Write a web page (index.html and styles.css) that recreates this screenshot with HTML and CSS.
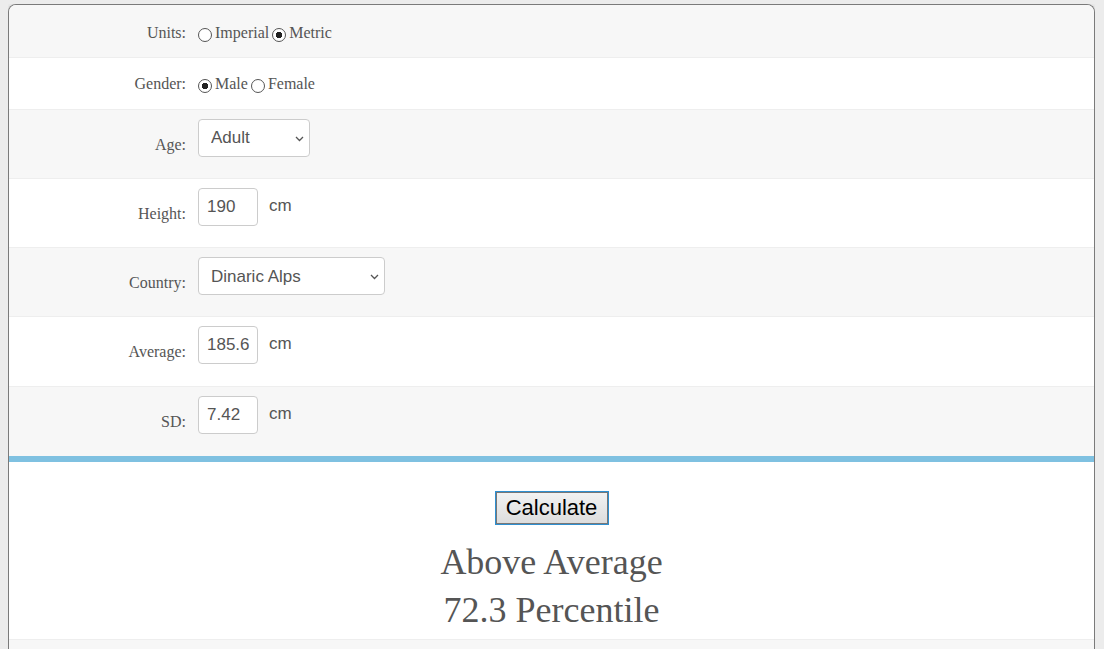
FILE: index.html
```html
<!DOCTYPE html>
<html>
<head>
    <title>Height Percentile Calculator</title>
    <link rel="stylesheet" href="styles.css">
</head>
<body>
    <div class="calculator">
        <form class="form">
            <div class="row first">
                <label class="label">Units:</label>
                <div class="field">
                    <input type="radio" name="units" class="radio"><span>Imperial</span><input type="radio" name="units" class="radio" checked><span>Metric</span>
                </div>
            </div>
            <div class="row short white">
                <label class="label">Gender:</label>
                <div class="field">
                    <input type="radio" name="gender" class="radio" checked><span>Male</span><input type="radio" name="gender" class="radio"><span>Female</span>
                </div>
            </div>
            <div class="row tall">
                <label class="label">Age:</label>
                <div class="field">
                    <div class="select-wrap">
                        <select class="select age">
                            <option>Adult</option>
                            <option>Child</option>
                        </select>
                        <svg class="chevron" width="9" height="6" viewBox="0 0 9 6"><path d="M1 1l3.5 3.5L8 1" fill="none" stroke="#555" stroke-width="1.3"/></svg>
                    </div>
                </div>
            </div>
            <div class="row tall white">
                <label class="label">Height:</label>
                <div class="field">
                    <input type="text" class="number" value="190"><span class="unit">cm</span>
                </div>
            </div>
            <div class="row tall">
                <label class="label">Country:</label>
                <div class="field">
                    <div class="select-wrap">
                        <select class="select country">
                            <option>Dinaric Alps</option>
                            <option>Netherlands</option>
                        </select>
                        <svg class="chevron" width="9" height="6" viewBox="0 0 9 6"><path d="M1 1l3.5 3.5L8 1" fill="none" stroke="#555" stroke-width="1.3"/></svg>
                    </div>
                </div>
            </div>
            <div class="row tall white">
                <label class="label">Average:</label>
                <div class="field">
                    <input type="text" class="number" value="185.6"><span class="unit">cm</span>
                </div>
            </div>
            <div class="row tall last">
                <label class="label">SD:</label>
                <div class="field">
                    <input type="text" class="number" value="7.42"><span class="unit">cm</span>
                </div>
            </div>
        </form>

        <div class="result">
            <button type="button" class="calc-btn">Calculate</button>
            <div class="verdict">Above Average</div>
            <div class="verdict">72.3 Percentile</div>
        </div>
        <div class="footer"></div>
    </div>
</body>
</html>
```

FILE: styles.css
```css
body {
    margin: 4px 9px 0 8px;
    background-color: #ececec;
    font-family: "Liberation Serif", serif;
    color: #555;
}

.calculator {
    background-color: #fff;
    border: 1px solid #7a7a7a;
    border-bottom: none;
    border-radius: 8px 8px 0 0;
    box-shadow: 0 0 4px rgba(0, 0, 0, 0.12);
    overflow: hidden;
}

.row {
    display: grid;
    grid-template-columns: 177px auto;
    column-gap: 12px;
    background-color: #f7f7f7;
    border-bottom: 1px solid #eee;
    font-size: 16px;
    line-height: 20px;
}

.row.white {
    background-color: #fff;
}

.row.first {
    padding: 18px 0 14px;
}

.row.short {
    padding: 16px 0 14.5px;
}

.row.tall {
    padding: 9px 0 21.3px;
}

.row.last {
    border-bottom: none;
    padding-bottom: 22.3px;
}

.label {
    text-align: right;
}

.tall .label {
    padding-top: 16px;
}

.field {
    display: flex;
    align-items: center;
}

.radio {
    appearance: none;
    width: 14px;
    height: 14px;
    margin: 4px 3px 0 0;
    border: 1px solid #555;
    border-radius: 50%;
    background: #fff;
}

.radio:checked {
    background: radial-gradient(circle, #222 0 3px, #fff 3.5px);
}

.field span + .radio {
    margin-left: 3px;
}

.select,
.number {
    height: 38px;
    box-sizing: border-box;
    border: 1px solid #ccc;
    border-radius: 4px;
    background-color: #fff;
    font-family: "Liberation Sans", Arial, sans-serif;
    font-size: 17px;
    color: #555;
}

.select-wrap {
    position: relative;
    display: flex;
}

.select {
    appearance: none;
    padding: 0 4px 0 12px;
}

.chevron {
    position: absolute;
    right: 6px;
    top: 17px;
    pointer-events: none;
}

.select.age {
    width: 112px;
}

.select.country {
    width: 187px;
}

.number {
    width: 60px;
    padding: 0 0 0 8px;
}

.unit {
    margin-left: 11px;
    margin-top: -2px;
    font-family: "Liberation Sans", Arial, sans-serif;
    font-size: 17px;
}

.result {
    border-top: 6px solid #7fc1e1;
    padding: 29px 0 5px;
    text-align: center;
}

.calc-btn {
    width: 114px;
    height: 34px;
    padding: 0;
    border: 1px solid #2f8fd0;
    box-shadow: inset 0 0 0 1px #777;
    background: linear-gradient(#f3f3f3, #dcdcdc);
    font-family: "Liberation Sans", Arial, sans-serif;
    font-size: 22px;
    color: #000;
    margin-bottom: 13px;
    vertical-align: top;
}

.verdict {
    font-size: 36px;
    line-height: 48px;
}

.footer {
    height: 20px;
    background-color: #f7f7f7;
    border-top: 1px solid #eee;
}
```
